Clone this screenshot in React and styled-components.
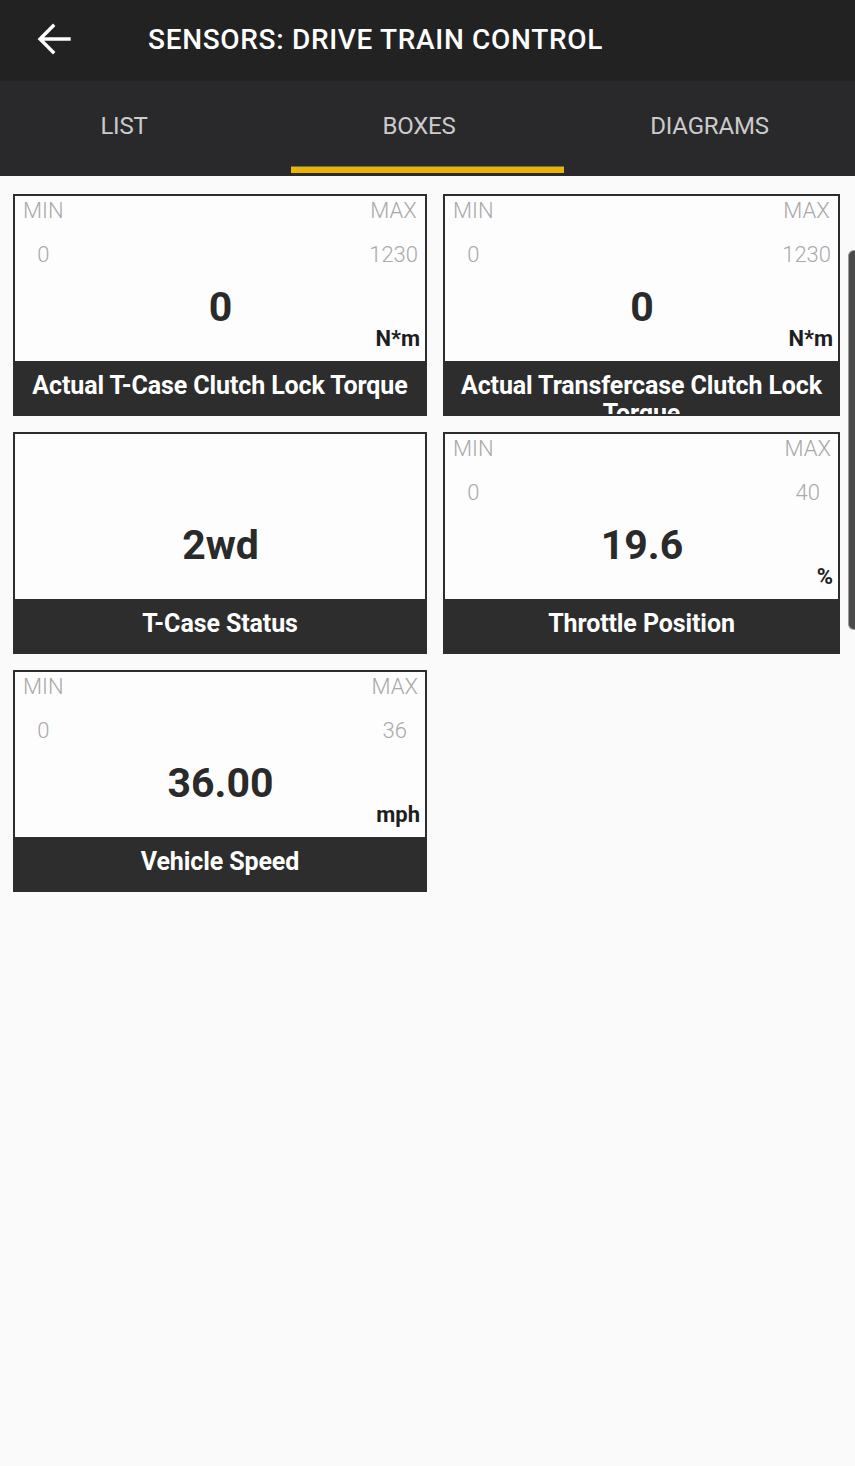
import React from "react";
import styled, { createGlobalStyle } from "styled-components";

const GlobalStyle = createGlobalStyle`
  html, body {
    margin: 0;
    padding: 0;
    background: #fafafa;
  }
  body {
    font-family: Roboto, "Liberation Sans", sans-serif;
  }
  * {
    box-sizing: border-box;
  }
`;

const Screen = styled.div`
  width: 855px;
  min-height: 1466px;
  background: #fafafa;
  display: flex;
  flex-direction: column;
`;

const AppBar = styled.header`
  height: 81px;
  background: #222222;
  display: flex;
  align-items: center;
  padding-left: 35px;
`;

const BackButton = styled.button`
  width: 38px;
  height: 38px;
  padding: 0;
  border: none;
  background: transparent;
  display: flex;
  align-items: center;
  justify-content: center;
  margin-right: 75px;
  margin-top: -4px;
`;

const Title = styled.h1`
  margin: 0;
  margin-top: -2px;
  color: #ffffff;
  font-size: 28px;
  font-weight: 500;
  letter-spacing: 0.68px;
`;

const TabBar = styled.nav`
  height: 95px;
  background: #29292b;
  display: grid;
  grid-template-columns: 291px 273px 1fr;
`;

const Tab = styled.div`
  position: relative;
  display: flex;
  align-items: center;
  justify-content: center;
  padding-right: ${(p) => p.$shift || 0}px;
  padding-bottom: 6px;
  color: #cbcbcb;
  font-size: 24px;
  font-weight: 400;
  letter-spacing: -0.2px;
`;

const Indicator = styled.span`
  position: absolute;
  left: 0;
  right: 0;
  bottom: 3px;
  height: 7px;
  background: #ebb400;
  border-top: 1px solid #6b6b6b;
`;

const Content = styled.main`
  position: relative;
  flex: 1;
  padding: 18px 0 0 13px;
`;

const Grid = styled.div`
  display: grid;
  grid-template-columns: 414px 397px;
  column-gap: 16px;
  row-gap: 16px;
`;

const Card = styled.div`
  height: 222px;
  border: 2px solid #2d2d2d;
  background: #2d2d2d;
  display: flex;
  flex-direction: column;
`;

const Body = styled.div`
  height: 165px;
  flex-shrink: 0;
  background: #fdfdfd;
  padding: 1px 7px 0 8px;
  display: flex;
  flex-direction: column;
`;

const Range = styled.div`
  display: flex;
  justify-content: space-between;
  visibility: ${(p) => (p.$hidden ? "hidden" : "visible")};
`;

const Stat = styled.div`
  display: flex;
  flex-direction: column;
  align-items: center;
  color: #a9a9a9;
  font-size: 22px;
  font-weight: 300;
  line-height: 28px;
`;

const StatValue = styled.span`
  margin-top: 16px;
`;

const Reading = styled.div`
  margin-top: 14px;
  text-align: center;
  color: #2a2a2a;
  font-size: 41px;
  font-weight: 700;
  line-height: 48px;
`;

const Unit = styled.div`
  margin-top: -4px;
  margin-right: -2px;
  text-align: right;
  color: #1e1e1e;
  font-size: 22px;
  font-weight: 700;
  line-height: 24px;
  min-height: 24px;
`;

const Label = styled.div`
  flex: 1;
  overflow: hidden;
  padding: 11px 4px 0;
  text-align: center;
  color: #ffffff;
  font-size: 25px;
  font-weight: 700;
  line-height: 28px;
  letter-spacing: -0.1px;
`;

const ScrollThumb = styled.div`
  position: absolute;
  right: 0;
  top: 74px;
  width: 7px;
  height: 380px;
  border-radius: 6px 0 0 6px;
  background: #4a4a4a;
  border: 1px solid #9a9a9a;
  border-right: none;
`;

const sensors = [
  { label: "Actual T-Case Clutch Lock Torque", min: "0", max: "1230", value: "0", unit: "N*m" },
  { label: "Actual Transfercase Clutch Lock Torque", min: "0", max: "1230", value: "0", unit: "N*m" },
  { label: "T-Case Status", value: "2wd" },
  { label: "Throttle Position", min: "0", max: "40", value: "19.6", unit: "%" },
  { label: "Vehicle Speed", min: "0", max: "36", value: "36.00", unit: "mph" },
];

function BackArrow() {
  return (
    <svg width="36" height="36" viewBox="0 0 36 36" fill="none">
      <path
        d="M33 18H5M17 5L4 18l13 13"
        stroke="#ffffff"
        strokeWidth="3.4"
        strokeLinecap="square"
      />
    </svg>
  );
}

function SensorBox({ info }) {
  const hasRange = info.min !== undefined;
  return (
    <Card>
      <Body>
        <Range $hidden={!hasRange}>
          <Stat>
            <span>MIN</span>
            <StatValue>{info.min || "0"}</StatValue>
          </Stat>
          <Stat>
            <span>MAX</span>
            <StatValue>{info.max || "0"}</StatValue>
          </Stat>
        </Range>
        <Reading>{info.value}</Reading>
        <Unit>{info.unit}</Unit>
      </Body>
      <Label>{info.label}</Label>
    </Card>
  );
}

export default function App() {
  return (
    <Screen>
      <GlobalStyle />
      <AppBar>
        <BackButton type="button" aria-label="Back">
          <BackArrow />
        </BackButton>
        <Title>SENSORS: DRIVE TRAIN CONTROL</Title>
      </AppBar>
      <TabBar>
        <Tab $shift={43}>LIST</Tab>
        <Tab $shift={17}>
          BOXES
          <Indicator />
        </Tab>
        <Tab>DIAGRAMS</Tab>
      </TabBar>
      <Content>
        <Grid>
          {sensors.map((s) => (
            <SensorBox key={s.label} info={s} />
          ))}
        </Grid>
        <ScrollThumb />
      </Content>
    </Screen>
  );
}
